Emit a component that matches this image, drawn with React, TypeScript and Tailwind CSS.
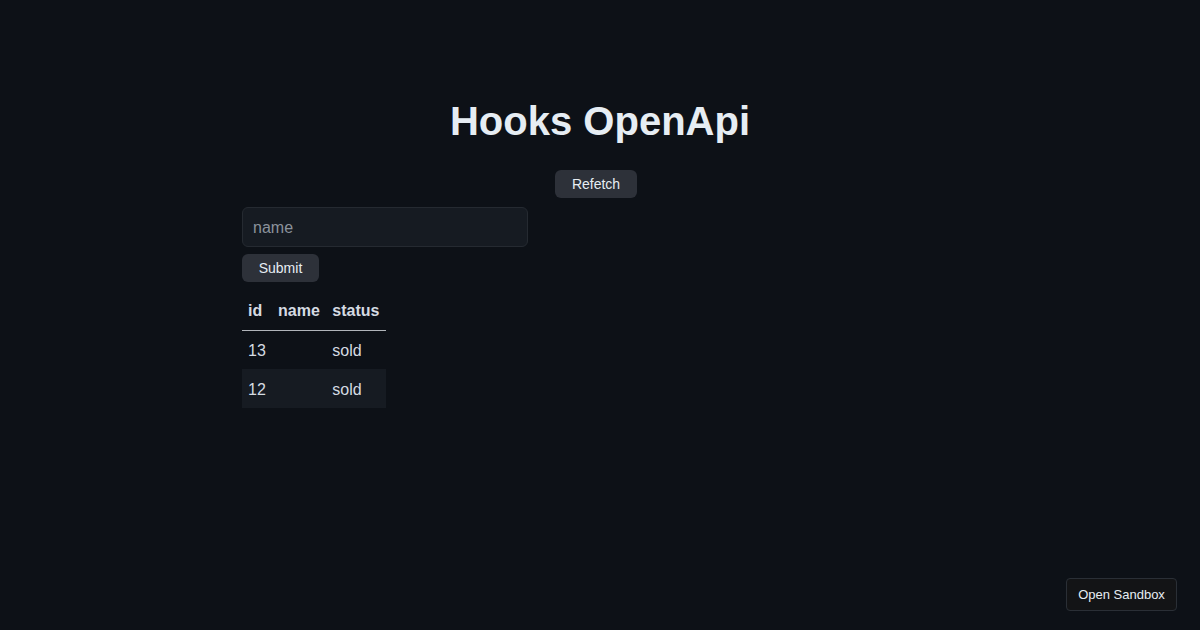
export default function App() {
  const pets = [
    { id: 13, name: "", status: "sold" },
    { id: 12, name: "", status: "sold" },
  ];

  return (
    <div className="relative min-h-[630px] w-full bg-[#0d1117] text-[#e6edf3] font-['Liberation_Sans',Arial,sans-serif]">
      <div className="mx-auto w-[716px] pt-[97px]">
        <h1 className="text-center text-[40px] font-bold leading-[48px]">Hooks OpenApi</h1>
        <div className="mt-[25px] flex justify-center pr-[8px]">
          <button className="h-[28px] rounded-[6px] bg-[#2d3139] px-[17px] text-[14px] text-[#e6edf3]">
            Refetch
          </button>
        </div>
        <form className="mt-[9px] flex flex-col items-start gap-[7px]">
          <input
            placeholder="name"
            className="h-[40px] w-[286px] rounded-[6px] border border-[#252a31] bg-[#161b22] px-[10px] pt-[1px] text-[16px] text-[#e6edf3] placeholder:text-[#8b929b] outline-none"
          />
          <button
            type="button"
            className="h-[28px] w-[77px] rounded-[6px] bg-[#2d3139] text-[14px] text-[#e6edf3]"
          >
            Submit
          </button>
        </form>
        <table className="mt-[10px] w-[144px] border-collapse text-left text-[16px]">
          <thead>
            <tr className="border-b border-[#b1b5ba]">
              <th className="h-[38px] px-[6px] font-bold text-[#d5dbe2]">id</th>
              <th className="h-[38px] px-[6px] font-bold text-[#d5dbe2]">name</th>
              <th className="h-[38px] px-[6px] font-bold text-[#d5dbe2]">status</th>
            </tr>
          </thead>
          <tbody>
            {pets.map((p, i) => (
              <tr key={p.id} className={i % 2 === 1 ? "bg-[#161b22]" : ""}>
                <td className="h-[39px] px-[6px] pt-[2px] text-[#d5dbe2]">{p.id}</td>
                <td className="h-[39px] px-[6px] pt-[2px] text-[#d5dbe2]">{p.name}</td>
                <td className="h-[39px] px-[6px] pt-[2px] text-[#d5dbe2]">{p.status}</td>
              </tr>
            ))}
          </tbody>
        </table>
      </div>
      <button className="absolute bottom-[19px] right-[23px] h-[33px] w-[111px] rounded-[4px] border border-[#2a2f36] bg-[#131416] text-[13px] text-[#e6edf3]">
        Open Sandbox
      </button>
    </div>
  );
}
